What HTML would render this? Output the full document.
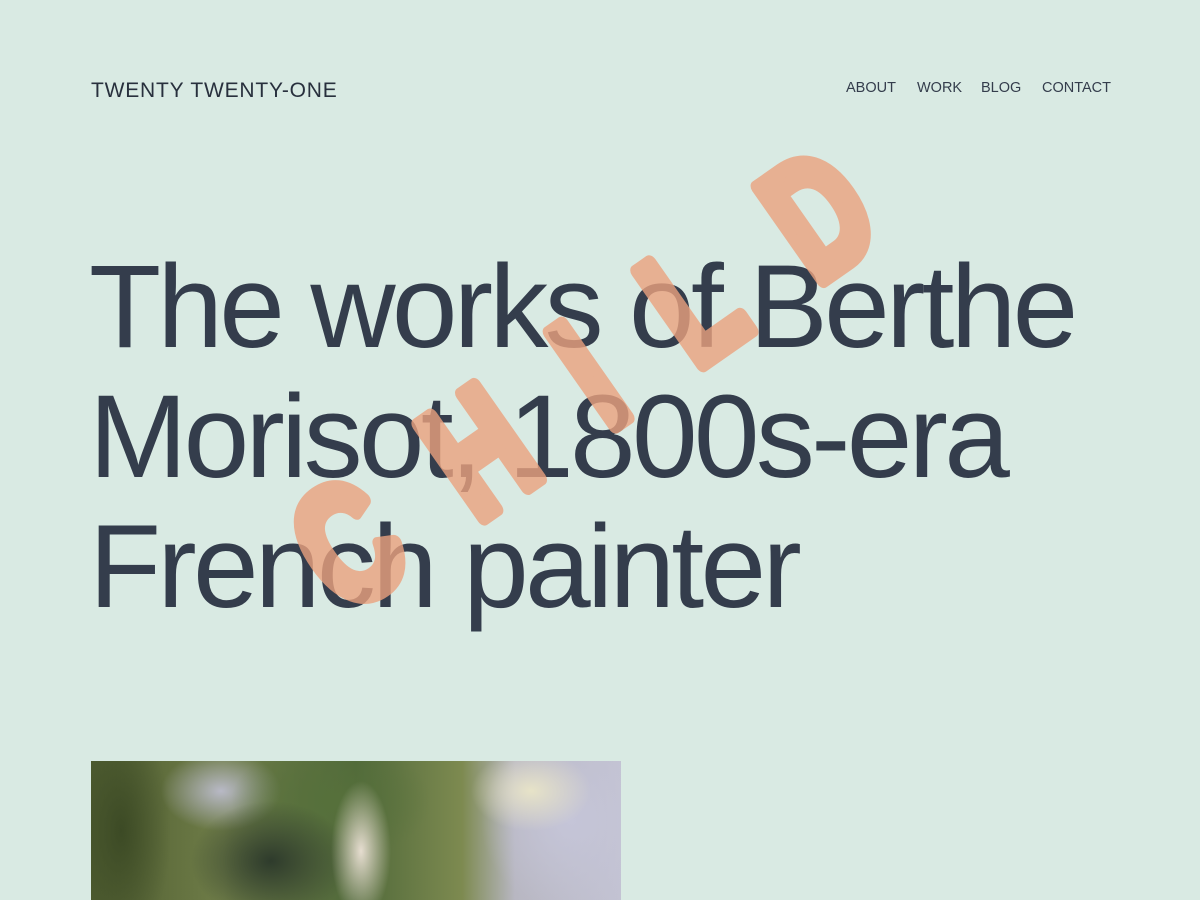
<!DOCTYPE html>
<html><head><meta charset="utf-8"><style>
html,body{margin:0;padding:0;}
body{width:1200px;height:900px;overflow:hidden;background:#d9eae3;font-family:"Liberation Sans",sans-serif;color:#28303d;position:relative;}
.title{position:absolute;left:91px;top:79px;font-size:21px;letter-spacing:0.8px;}
.nav{position:absolute;top:80px;font-size:14.5px;letter-spacing:0;color:#343d4c;}
h1{position:absolute;left:89px;top:242px;margin:0;font-weight:normal;font-size:118px;line-height:130px;letter-spacing:-3.7px;color:#343d4c;}
.img{position:absolute;left:91px;top:761px;width:530px;height:139px;
background:
radial-gradient(ellipse 60px 40px at 440px 30px,#e7e3c8,transparent),
radial-gradient(ellipse 90px 90px at 480px 60px,#c5c5d8,transparent),
radial-gradient(ellipse 30px 70px at 270px 90px,#e6ddd0,transparent),
radial-gradient(ellipse 80px 60px at 180px 100px,#2e3b2c,transparent),
radial-gradient(ellipse 100px 60px at 240px 40px,#56703b,transparent),
radial-gradient(ellipse 60px 40px at 130px 30px,#b8b9c6,transparent),
radial-gradient(ellipse 50px 120px at 30px 70px,#3c4a25,transparent),
linear-gradient(90deg,#4e5c30 0%,#6f7d48 25%,#50693a 50%,#7d8a50 70%,#b8b7c2 80%,#c3c3d3 100%);}
svg{position:absolute;left:0;top:0;}
</style></head><body>
<div class="title">TWENTY TWENTY-ONE</div>
<div class="nav" style="left:846px">ABOUT</div>
<div class="nav" style="left:917px">WORK</div>
<div class="nav" style="left:981px">BLOG</div>
<div class="nav" style="left:1042px">CONTACT</div>
<h1>The works of Berthe<br>Morisot, 1800s-era<br>French painter</h1>
<div class="img"></div>
<svg width="1200" height="900"><g opacity="0.8" fill="#eba27e" stroke="#eba27e" stroke-width="14" stroke-linejoin="round">
<text transform="translate(345,615) rotate(-35) scale(0.8,1.1)" font-family="Liberation Sans" font-weight="bold" font-size="150" letter-spacing="92">CHILD</text>
</g></svg>
</body></html>
